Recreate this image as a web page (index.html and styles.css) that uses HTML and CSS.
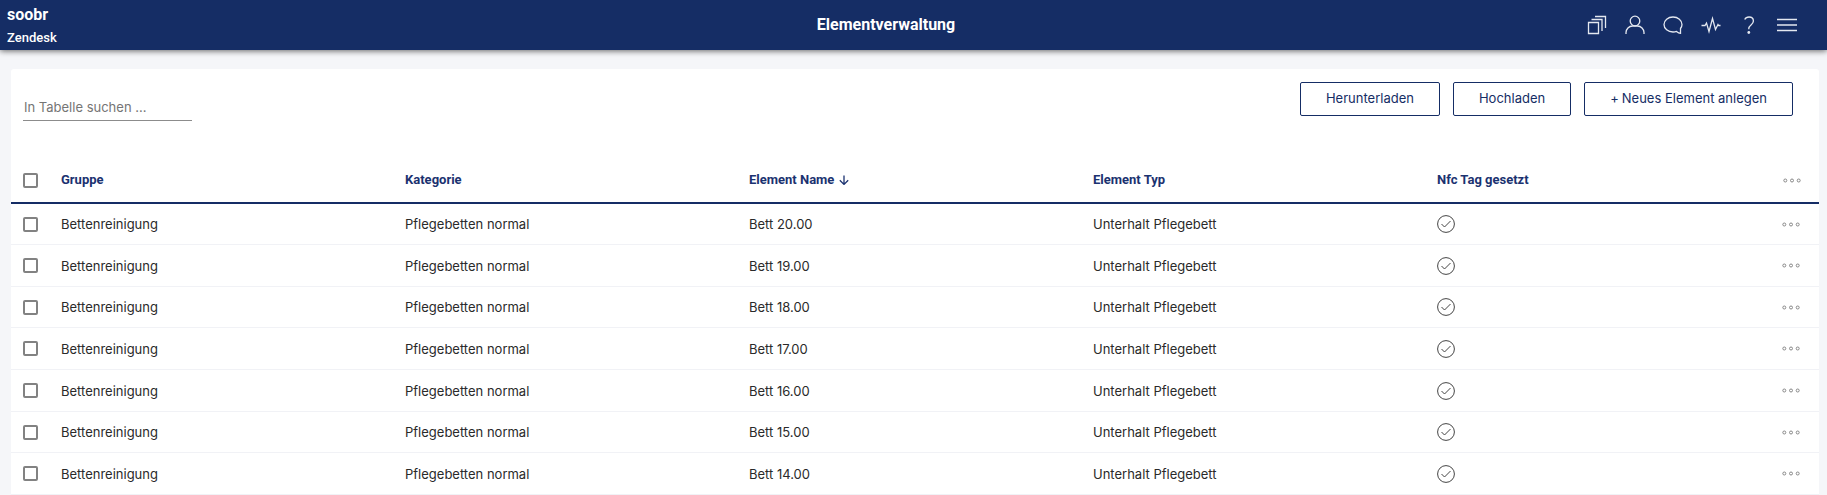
FILE: index.html
```
<!DOCTYPE html>
<html lang="de">
<head>
<meta charset="utf-8">
<title>Elementverwaltung</title>
<link rel="stylesheet" href="styles.css">
</head>
<body>
<svg class="sprite" aria-hidden="true">
  <symbol id="check" viewBox="0 0 18 18"><circle cx="9" cy="9" r="8.4"/><path d="M4.500 9l3 3 6-6"/></symbol>
  <symbol id="dots" viewBox="0 0 18 5"><circle cx="2.3" cy="2.5" r="1.5"/><circle cx="9" cy="2.5" r="1.5"/><circle cx="15.7" cy="2.5" r="1.5"/></symbol>
</svg>
<header class="topbar">
  <div class="brand"><strong class="brand-name">soobr</strong><span class="brand-client">Zendesk</span></div>
  <h1 class="title">Elementverwaltung</h1>
  <nav class="tools">
    <button class="tool" aria-label="Kopien"><svg viewBox="0 0 20 20"><path d="M1.500 7.500h10v11h-10zM4.500 4.500h10.500V16M8 1.500h10.500V13"/></svg></button>
    <button class="tool" aria-label="Profil"><svg viewBox="0 0 20 20"><circle cx="10" cy="6" r="4.8"/><path d="M1 19v-1.500c0-3.500 3-6.500 6.500-6.500h5c3.500 0 6.500 3 6.500 6.500V19"/></svg></button>
    <button class="tool" aria-label="Chat"><svg viewBox="0 0 20 20"><path d="M17.500 18.300V13.500C18.500 12.200 19 11 19 9.500 19 5.200 15 2 10 2S1 5.200 1 9.500 5 17 10 17c1.300 0 2.500-.2 3.500-.6 1.200 1 2.500 1.800 4 1.900z"/></svg></button>
    <button class="tool" aria-label="Aktivität"><svg viewBox="0 0 20 20"><path d="M.5 10.500h3.500l1.500-2.500 2.500 8.500L11.500 3.500l3 11 2.500-5 .7 1h1.800"/></svg></button>
    <button class="tool" aria-label="Hilfe"><svg viewBox="0 0 20 20"><path d="M5.700 4.500C6.600 2.800 8 2 10 2c2.600 0 4.400 1.600 4.400 4 0 3.800-4.600 4-4.600 7.500v.8"/><circle class="dot" cx="9.800" cy="17.500" r="1.400"/></svg></button>
    <button class="tool" aria-label="Menü"><svg viewBox="0 0 20 20"><path d="M0 4.500h20M0 10h20M0 15.500h20"/></svg></button>
  </nav>
</header>
<main class="card">
  <div class="toolbar">
    <input class="search" type="text" placeholder="In Tabelle suchen ..." aria-label="In Tabelle suchen">
    <div class="actions">
      <button class="btn">Herunterladen</button>
      <button class="btn">Hochladen</button>
      <button class="btn"><span class="plus">+</span>Neues Element anlegen</button>
    </div>
  </div>
  <table class="table">
    <thead><tr>
      <th class="col-check"><input class="check" type="checkbox" aria-label="Alle auswählen"></th>
      <th>Gruppe</th><th>Kategorie</th>
      <th>Element Name <svg class="sort" viewBox="0 0 10 10"><path d="M5 .5v8.800M.8 5.200L5 9.400l4.200-4.200"/></svg></th>
      <th>Element Typ</th><th>Nfc Tag gesetzt</th>
      <th class="col-more"><button class="more" aria-label="Optionen"><svg><use href="#dots"/></svg></button></th>
    </tr></thead>
    <tbody>
      <tr><td><input class="check" type="checkbox" aria-label="Bett 20.00"></td><td>Bettenreinigung</td><td>Pflegebetten normal</td><td>Bett 20.00</td><td>Unterhalt Pflegebett</td><td><svg class="ok"><use href="#check"/></svg></td><td><button class="more" aria-label="Optionen"><svg><use href="#dots"/></svg></button></td></tr>
      <tr><td><input class="check" type="checkbox" aria-label="Bett 19.00"></td><td>Bettenreinigung</td><td>Pflegebetten normal</td><td>Bett 19.00</td><td>Unterhalt Pflegebett</td><td><svg class="ok"><use href="#check"/></svg></td><td><button class="more" aria-label="Optionen"><svg><use href="#dots"/></svg></button></td></tr>
      <tr><td><input class="check" type="checkbox" aria-label="Bett 18.00"></td><td>Bettenreinigung</td><td>Pflegebetten normal</td><td>Bett 18.00</td><td>Unterhalt Pflegebett</td><td><svg class="ok"><use href="#check"/></svg></td><td><button class="more" aria-label="Optionen"><svg><use href="#dots"/></svg></button></td></tr>
      <tr><td><input class="check" type="checkbox" aria-label="Bett 17.00"></td><td>Bettenreinigung</td><td>Pflegebetten normal</td><td>Bett 17.00</td><td>Unterhalt Pflegebett</td><td><svg class="ok"><use href="#check"/></svg></td><td><button class="more" aria-label="Optionen"><svg><use href="#dots"/></svg></button></td></tr>
      <tr><td><input class="check" type="checkbox" aria-label="Bett 16.00"></td><td>Bettenreinigung</td><td>Pflegebetten normal</td><td>Bett 16.00</td><td>Unterhalt Pflegebett</td><td><svg class="ok"><use href="#check"/></svg></td><td><button class="more" aria-label="Optionen"><svg><use href="#dots"/></svg></button></td></tr>
      <tr><td><input class="check" type="checkbox" aria-label="Bett 15.00"></td><td>Bettenreinigung</td><td>Pflegebetten normal</td><td>Bett 15.00</td><td>Unterhalt Pflegebett</td><td><svg class="ok"><use href="#check"/></svg></td><td><button class="more" aria-label="Optionen"><svg><use href="#dots"/></svg></button></td></tr>
      <tr><td><input class="check" type="checkbox" aria-label="Bett 14.00"></td><td>Bettenreinigung</td><td>Pflegebetten normal</td><td>Bett 14.00</td><td>Unterhalt Pflegebett</td><td><svg class="ok"><use href="#check"/></svg></td><td><button class="more" aria-label="Optionen"><svg><use href="#dots"/></svg></button></td></tr>
    </tbody>
  </table>
</main>
</body>
</html>
```
FILE: styles.css
```
* { box-sizing: border-box; }
body {
  margin: 0;
  background: #f5f6f9;
  color: #2a2a2a;
  font: 13px/20px Inter, "Liberation Sans", sans-serif;
}
button { font: inherit; cursor: pointer; }
svg { fill: none; }
.sprite { display: none; }

.topbar {
  display: grid;
  grid-template-columns: 1fr auto 1fr;
  align-items: center;
  height: 50px;
  padding: 0 30px 0 7px;
  background: #152d65;
  color: #fff;
  box-shadow: 0 1px 6px rgba(0, 0, 0, .6);
}
.brand { display: flex; flex-direction: column; gap: 4px; padding-top: 2px; font-family: Roboto, sans-serif; }
.brand-name { font-size: 16px; font-weight: 700; line-height: 20px; }
.brand-client { font-size: 13px; font-weight: 500; line-height: 18px; }
.title { margin: 0 32px 0 0; font: 700 16px/20px Roboto, sans-serif; }
.tools { display: flex; justify-content: flex-end; gap: 18px; }
.tool {
  display: flex;
  width: 20px;
  height: 20px;
  padding: 0;
  border: 0;
  background: none;
}
.tool svg { width: 20px; height: 20px; stroke: #e4e8f0; stroke-width: 1.3; }
.tool .dot { fill: #e4e8f0; stroke: none; }

.card { margin: 19px 8px 0 11px; border-radius: 3px 3px 0 0; background: #fff; }
.toolbar {
  display: flex;
  justify-content: space-between;
  align-items: flex-start;
  padding: 13px 26px 0 12px;
  height: 89px;
}
.search {
  width: 169px;
  height: 27px;
  margin-top: 12px;
  padding: 0 0 0 1px;
  border: 0;
  border-bottom: 1px solid #8c8c8c;
  background: none;
  color: #222;
  font: inherit;
}
.search::placeholder { color: #757575; opacity: 1; }
.actions { display: flex; gap: 13px; }
.btn {
  height: 34px;
  padding: 0 25px 2px;
  border: 1px solid #152d65;
  border-radius: 2px;
  background: #fff;
  color: #152d65;
}
.plus { margin-right: 3px; }

.table { width: 100%; table-layout: fixed; border-collapse: separate; border-spacing: 0; }
.table th, .table td { padding: 0 0 0 1px; text-align: left; vertical-align: middle; }
.table th {
  height: 46px;
  border-bottom: 2px solid #152d65;
  color: #1b3270;
  font: 700 13px/20px Roboto, sans-serif;
}
.table td { height: 42px; border-bottom: 1px solid #f1f2f6; }
.table tr:first-child td, .table tr:nth-child(3n) td { height: 41px; }
.table .col-check { width: 49px; }
.table .col-more { width: 39px; }
.check {
  display: block;
  width: 15px;
  height: 15px;
  margin: 0 0 0 11px;
  appearance: none;
  border: 2px solid #828282;
  border-radius: 2px;
  background: #fff;
}
.check:checked { background: #152d65; }
.sort { width: 10px; height: 10px; margin-left: 1px; stroke: #1b3270; stroke-width: 1.3; vertical-align: -1px; }
.ok { display: block; width: 18px; height: 18px; stroke: #444; stroke-width: 1; }
.more { display: block; margin: 0 0 0 1px; padding: 0; border: 0; background: none; }
.col-more .more { margin-left: 2px; }
.more svg { display: block; width: 18px; height: 5px; stroke: #888; stroke-width: 1; }
```
